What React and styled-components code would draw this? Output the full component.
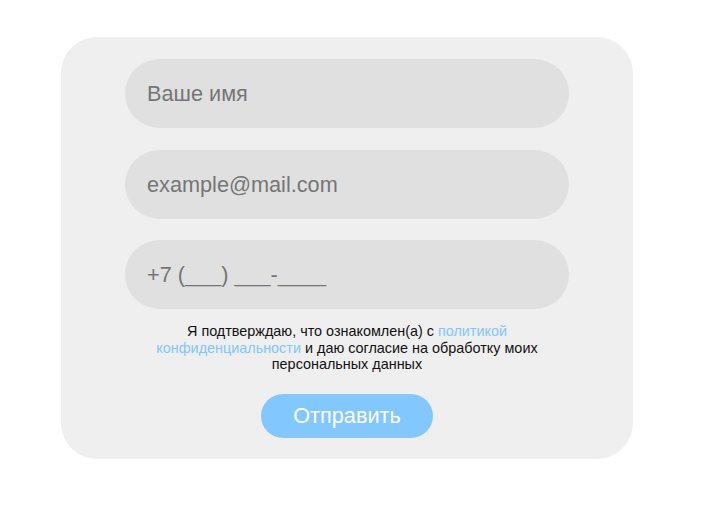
import React from "react";
import styled, { createGlobalStyle } from "styled-components";

const GlobalStyle = createGlobalStyle`
  body {
    margin: 0;
    background: #fff;
    font-family: Arial, "Liberation Sans", sans-serif;
  }
`;

const Page = styled.div`
  padding: 37px 0 0 61px;
`;

const Card = styled.form`
  width: 572px;
  box-sizing: border-box;
  background: #efefef;
  border-radius: 36px;
  padding: 22px 0 21px;
  display: flex;
  flex-direction: column;
  align-items: center;
`;

const Field = styled.input`
  width: 444px;
  height: 69px;
  box-sizing: border-box;
  border: none;
  outline: none;
  border-radius: 35px;
  background: #e0e0e0;
  padding: 0 22px;
  margin-bottom: ${({ $gap }) => $gap}px;
  font-family: Arial, "Liberation Sans", sans-serif;
  font-size: 21.7px;
  color: #777;

  ::placeholder {
    color: #777;
  }
`;

const Consent = styled.p`
  margin: 14px 0 0;
  width: 396px;
  text-align: center;
  font-size: 14.4px;
  line-height: 16.5px;
  color: #111;
`;

const Link = styled.a`
  color: #80c6ff;
  text-decoration: none;
`;

const Submit = styled.button`
  margin-top: 21px;
  width: 172px;
  height: 44px;
  border: none;
  border-radius: 22px;
  background: #82c8ff;
  color: #fff;
  font-family: Arial, "Liberation Sans", sans-serif;
  font-size: 21.7px;
  cursor: pointer;
`;

const App = () => (
  <Page>
    <GlobalStyle />
    <Card onSubmit={(e) => e.preventDefault()}>
      <Field placeholder="Ваше имя" $gap={22} />
      <Field placeholder="example@mail.com" $gap={21} />
      <Field placeholder="+7 (___) ___-____" $gap={0} />
      <Consent>
        Я подтверждаю, что ознакомлен(а) с{" "}
        <Link href="#">политикой конфиденциальности</Link> и даю согласие на
        обработку моих персональных данных
      </Consent>
      <Submit type="submit">Отправить</Submit>
    </Card>
  </Page>
);

export default App;
